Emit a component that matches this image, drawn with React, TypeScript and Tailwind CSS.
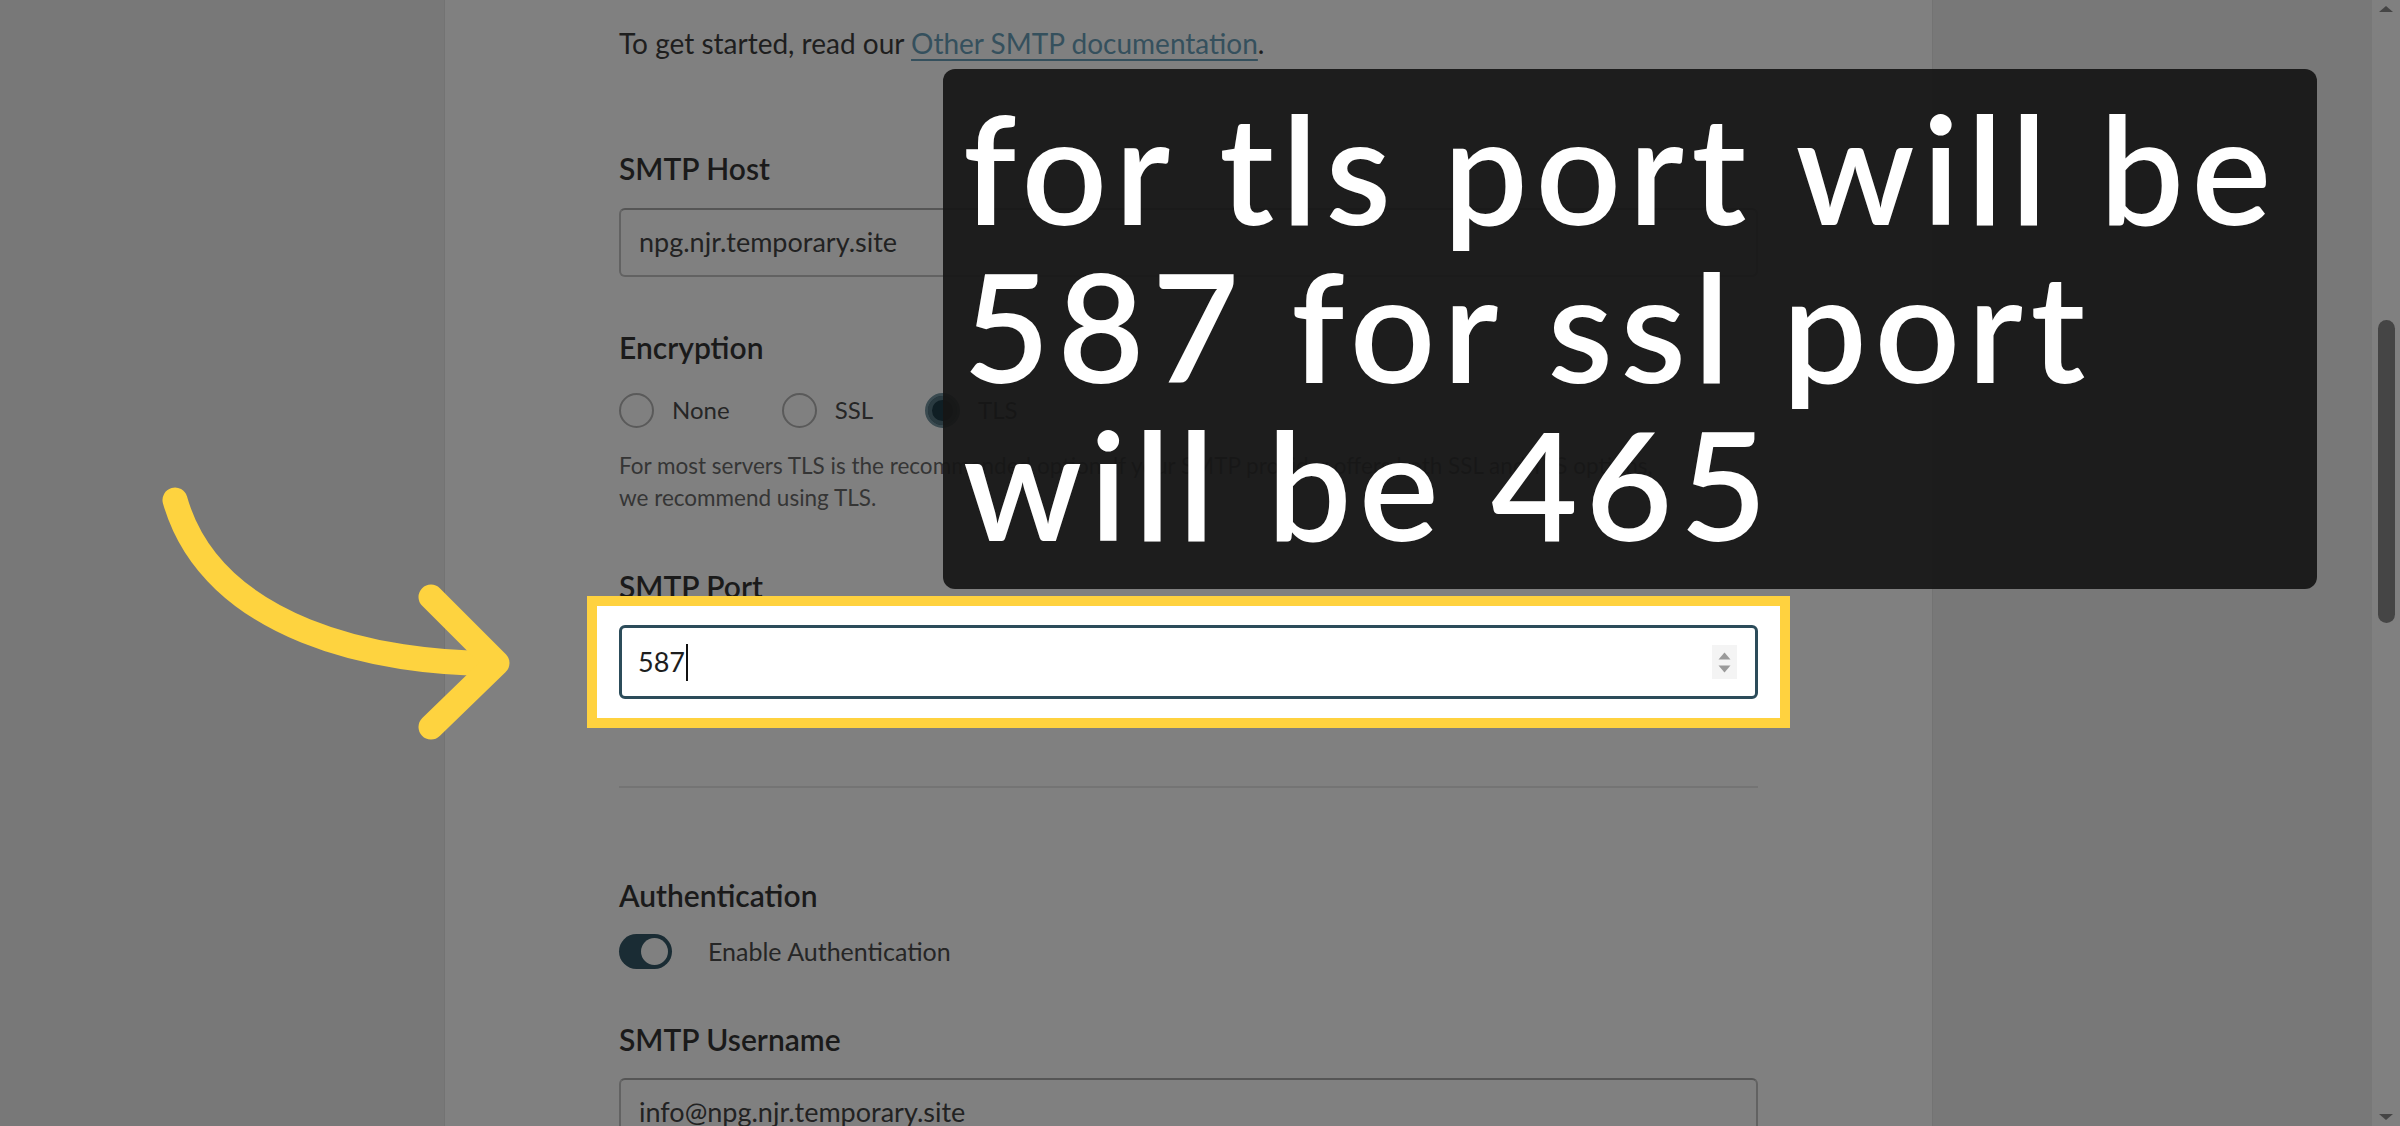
import React from "react";

const uiFont = { fontFamily: '"Segoe UI", Lato, "Noto Sans", sans-serif' };
const bigFont = { fontFamily: 'Lato, "Noto Sans", sans-serif' };

const FieldLabel = ({ children }: { children: React.ReactNode }) => (
  <div className="text-[30px] font-semibold leading-[40px] text-[#1a1a1a]">{children}</div>
);

const Radio = ({ label, checked }: { label: string; checked?: boolean }) => (
  <div className="flex items-center gap-[18px]">
    <div
      className={
        checked
          ? "h-[35px] w-[35px] rounded-full border-[3px] border-[#3a4a50] bg-[#0f1e24] shadow-[inset_0_0_0_4px_#2a3a40]"
          : "h-[35px] w-[35px] rounded-full border-2 border-[#5a5a5a]"
      }
    />
    <span className="text-[24px] leading-[36px] text-[#262626]">{label}</span>
  </div>
);

const TextInput = ({ value }: { value: string }) => (
  <div className="flex h-[69px] items-center rounded-[6px] border-2 border-[#626262] border-t-[#555555] px-[18px] text-[27px] text-[#222222]">
    {value}
  </div>
);

const ScrollBar = () => (
  <div className="flex w-[28px] flex-col items-center bg-[#808080]">
    <svg width="16" height="10" viewBox="0 0 16 10" className="mt-[4px]">
      <path d="M1 8 L8 2 L15 8 Z" fill="#454545" />
    </svg>
    <div className="mt-[306px] h-[303px] w-[17px] rounded-full bg-[#454545]" />
    <div className="flex-1" />
    <svg width="16" height="10" viewBox="0 0 16 10" className="mb-[4px]">
      <path d="M1 2 L8 8 L15 2 Z" fill="#454545" />
    </svg>
  </div>
);

export default function App() {
  return (
    <div className="relative flex h-[1126px] w-[2400px] overflow-hidden bg-[#787878]" style={uiFont}>
      <div className="w-[444px] shrink-0" />

      {/* settings card */}
      <div className="w-[1489px] shrink-0 border-x border-[#737373] bg-[#808080] px-[174px] pt-[23px]">
        <p className="text-[28px] leading-[40px] text-[#1e1e1e]">
          To get started, read our{" "}
          <span className="text-[#35505d] underline decoration-2 underline-offset-[5px]">
            Other SMTP documentation
          </span>
          .
        </p>

        <div className="mt-[85px]">
          <FieldLabel>SMTP Host</FieldLabel>
        </div>
        <div className="mt-[20px]">
          <TextInput value="npg.njr.temporary.site" />
        </div>

        <div className="mt-[50px]">
          <FieldLabel>Encryption</FieldLabel>
        </div>
        <div className="mt-[25px] flex h-[36px] items-center gap-[52px]">
          <Radio label="None" />
          <Radio label="SSL" />
          <Radio label="TLS" checked />
        </div>
        <p className="mt-[22px] whitespace-nowrap text-[22.5px] leading-[32px] text-[#353535]">
          For most servers TLS is the recommended option. If your SMTP provider offers both SSL and TLS options,
          <br />
          we recommend using TLS.
        </p>

        <div className="mt-[52px]">
          <FieldLabel>SMTP Port</FieldLabel>
        </div>
        {/* highlighted field */}
        <div className="relative -mx-[32px] -mt-[10px] border-[10px] border-[#ffd23f] bg-white px-[22px] py-[19px]">
          <div className="flex h-[74px] items-center rounded-[6px] border-[3px] border-[#2c4c5a] pl-[16px] pr-[18px]">
            <span className="text-[27px] text-[#1e1e1e]">587</span>
            <span className="ml-[1px] h-[37px] w-[2px] bg-[#111111]" />
            <div className="flex-1" />
            <div className="flex h-[34px] w-[25px] flex-col items-center justify-center gap-[5px] bg-[#f4f4f4]">
              <svg width="13" height="8" viewBox="0 0 13 8">
                <path d="M0.5 7.5 L6.5 0.5 L12.5 7.5 Z" fill="#9a9a9a" />
              </svg>
              <svg width="13" height="8" viewBox="0 0 13 8">
                <path d="M0.5 0.5 L6.5 7.5 L12.5 0.5 Z" fill="#9a9a9a" />
              </svg>
            </div>
          </div>
        </div>

        <div className="mt-[58px] h-[2px] bg-[#747474]" />

        <div className="mt-[87px]">
          <FieldLabel>Authentication</FieldLabel>
        </div>
        <div className="mt-[18px] flex items-center gap-[36px]">
          <div className="flex h-[35px] w-[53px] items-center justify-end rounded-full bg-[#1a2c34] pr-[4px]">
            <div className="h-[27px] w-[27px] rounded-full bg-[#808080]" />
          </div>
          <span className="text-[25px] leading-[36px] text-[#262626]">Enable Authentication</span>
        </div>

        <div className="mt-[50px]">
          <FieldLabel>SMTP Username</FieldLabel>
        </div>
        <div className="mt-[19px]">
          <TextInput value="info@npg.njr.temporary.site" />
        </div>
      </div>

      <div className="flex-1" />
      <ScrollBar />

      {/* caption overlay */}
      <div
        className="absolute left-[943px] top-[69px] h-[520px] w-[1374px] rounded-[12px] bg-[#161616]/[0.93] pl-[20px] pt-[19px] text-[150px] font-semibold leading-[158px] tracking-[7.5px] whitespace-nowrap text-white"
        style={bigFont}
      >
        for tls port will be
        <br />
        587 for ssl port
        <br />
        will be 465
      </div>

      {/* pointer arrow */}
      <svg
        className="absolute left-[140px] top-[470px]"
        width="400"
        height="280"
        viewBox="140 470 400 280"
        fill="none"
      >
        <path
          d="M175 500 C 212 630, 380 665, 496 663"
          stroke="#fed33f"
          strokeWidth="25"
          strokeLinecap="round"
        />
        <path
          d="M431 597 L497 663 L431 727"
          stroke="#fed33f"
          strokeWidth="25"
          strokeLinecap="round"
          strokeLinejoin="round"
        />
      </svg>
    </div>
  );
}
